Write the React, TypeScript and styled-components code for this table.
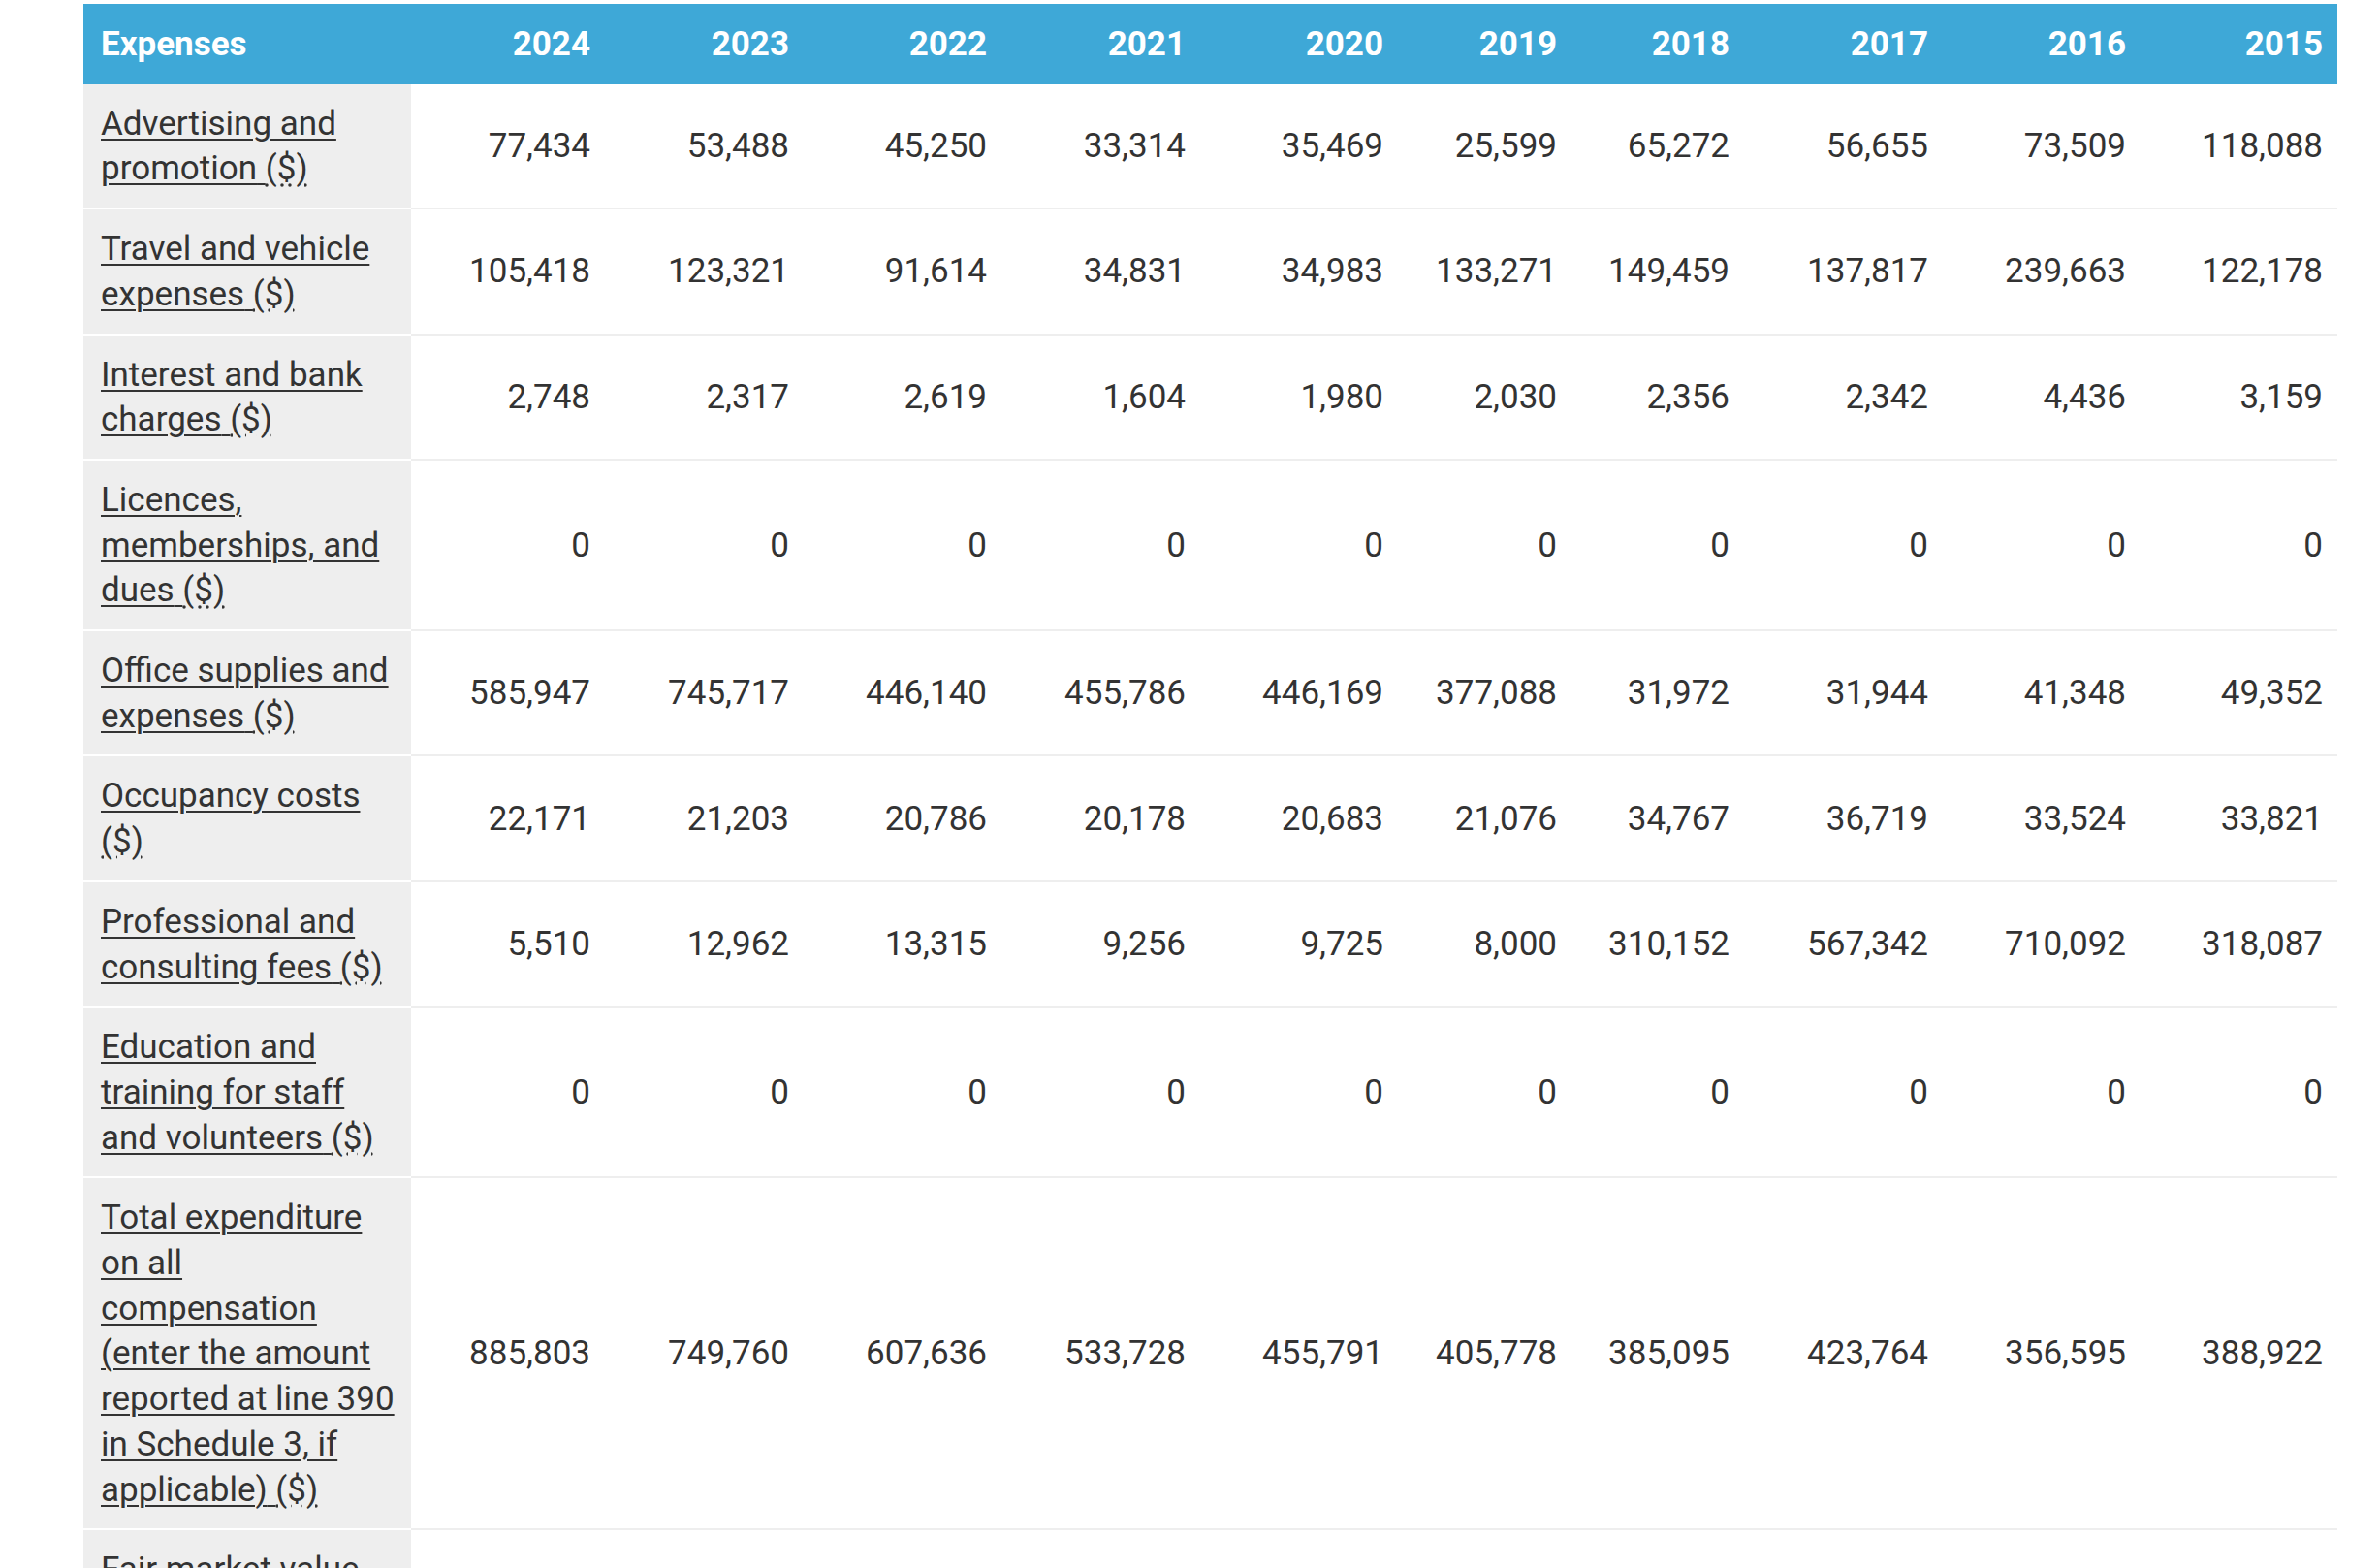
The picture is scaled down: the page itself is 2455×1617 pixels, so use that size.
import React from 'react';
import styled, { createGlobalStyle } from 'styled-components';

const GlobalStyle = createGlobalStyle`
  html, body {
    margin: 0;
    padding: 0;
    background: #ffffff;
  }
  body {
    font-family: Roboto, "Liberation Sans", Arial, sans-serif;
    color: #333333;
  }
`;

const Page = styled.div`
  padding: 4px 0 0 86px;
`;

const Table = styled.table`
  width: 2325px;
  table-layout: fixed;
  border-collapse: collapse;
  font-size: 35px;
  line-height: 46.7px;
`;

const HeadCell = styled.th<{ first?: boolean }>`
  background: #3ea8d7;
  color: #ffffff;
  font-weight: 700;
  text-align: ${props => props.first ? 'left' : 'right'};
  padding: 19px 15px 17px 18px;
  white-space: nowrap;
`;

const RowLabel = styled.th`
  background: #eeeeee;
  border-bottom: 2px solid #ffffff;
  font-weight: 400;
  text-align: left;
  vertical-align: top;
  padding: 18px 14px 16px 18px;
`;

const ValueCell = styled.td`
  border-bottom: 2px solid #eeeeee;
  text-align: right;
  vertical-align: middle;
  padding: 18px 15px 16px 10px;
  white-space: nowrap;
`;

const LabelLink = styled.a`
  color: #333333;
  text-decoration: underline;
  text-decoration-thickness: 2px;
  text-underline-offset: 4px;
`;

const Unit = styled.abbr`
  color: #333333;
  text-decoration: underline dotted;
  text-underline-offset: 4px;
  cursor: help;
`;

interface ExpenseRow {
  label: string;
  values: string[];
}

const years = ['2024', '2023', '2022', '2021', '2020', '2019', '2018', '2017', '2016', '2015'];
const widths = [200, 205, 204, 205, 204, 179, 178, 205, 204, 203];

const zeros = years.map(() => '0');

const rows: ExpenseRow[] = [
  { label: 'Advertising and promotion', values: ['77,434', '53,488', '45,250', '33,314', '35,469', '25,599', '65,272', '56,655', '73,509', '118,088'] },
  { label: 'Travel and vehicle expenses', values: ['105,418', '123,321', '91,614', '34,831', '34,983', '133,271', '149,459', '137,817', '239,663', '122,178'] },
  { label: 'Interest and bank charges', values: ['2,748', '2,317', '2,619', '1,604', '1,980', '2,030', '2,356', '2,342', '4,436', '3,159'] },
  { label: 'Licences, memberships, and dues', values: zeros },
  { label: 'Office supplies and expenses', values: ['585,947', '745,717', '446,140', '455,786', '446,169', '377,088', '31,972', '31,944', '41,348', '49,352'] },
  { label: 'Occupancy costs', values: ['22,171', '21,203', '20,786', '20,178', '20,683', '21,076', '34,767', '36,719', '33,524', '33,821'] },
  { label: 'Professional and consulting fees', values: ['5,510', '12,962', '13,315', '9,256', '9,725', '8,000', '310,152', '567,342', '710,092', '318,087'] },
  { label: 'Education and training for staff and volunteers', values: zeros },
  { label: 'Total expenditure on all compensation (enter the amount reported at line 390 in Schedule 3, if applicable)', values: ['885,803', '749,760', '607,636', '533,728', '455,791', '405,778', '385,095', '423,764', '356,595', '388,922'] },
  { label: 'Fair market value of all donated goods used in charitable activities', values: zeros },
];

const App = () => {
  return (
    <Page>
      <GlobalStyle />
      <Table>
        <colgroup>
          <col style={{ width: 338 }} />
          {widths.map((w, i) => <col key={i} style={{ width: w }} />)}
        </colgroup>
        <thead>
          <tr>
            <HeadCell first>Expenses</HeadCell>
            {years.map(y => <HeadCell key={y}>{y}</HeadCell>)}
          </tr>
        </thead>
        <tbody>
          {rows.map(row => (
            <tr key={row.label}>
              <RowLabel scope='row'>
                <LabelLink href='#'>{row.label} </LabelLink>
                <Unit title='dollars'>($)</Unit>
              </RowLabel>
              {row.values.map((v, i) => <ValueCell key={i}>{v}</ValueCell>)}
            </tr>
          ))}
        </tbody>
      </Table>
    </Page>
  );
};

export default App;
